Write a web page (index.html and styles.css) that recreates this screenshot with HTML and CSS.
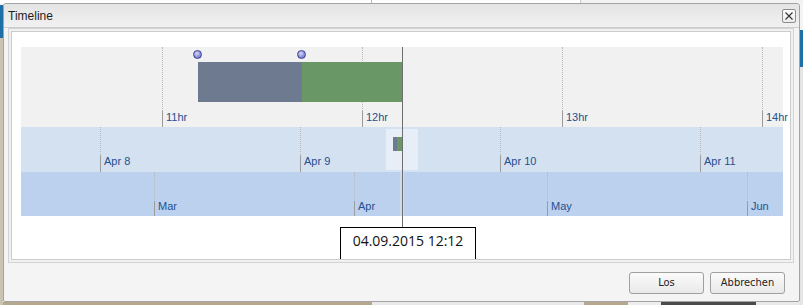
FILE: index.html
```html
<!DOCTYPE html>
<html>
<head>
<meta charset="utf-8">
<title>Timeline</title>
<link rel="stylesheet" href="styles.css">
</head>
<body>
<div class="dialog">
  <div class="titlebar">
    <span class="title">Timeline</span>
    <button class="close" aria-label="close">
      <svg width="12" height="12" viewBox="0 0 12 12"><path d="M2.5 2.5 L9.5 9.5 M9.5 2.5 L2.5 9.5" stroke="#333" stroke-width="1.1" fill="none"/></svg>
    </button>
  </div>
  <div class="panel">
    <div class="panel-inner">
      <div class="timeline">
        <div class="band band-hours">
          <div class="tick" style="left:141px"><span>11hr</span></div>
          <div class="tick" style="left:341px"><span>12hr</span></div>
          <div class="tick" style="left:541px"><span>13hr</span></div>
          <div class="tick" style="left:741px"><span>14hr</span></div>
          <div class="bar bar-gray" style="left:177px;width:104px"></div>
          <div class="bar bar-green" style="left:281px;width:100px"></div>
          <div class="handle" style="left:172px"></div>
          <div class="handle" style="left:276px"></div>
        </div>
        <div class="band band-days">
          <div class="highlight"></div>
          <div class="mini mini-gray"></div>
          <div class="mini mini-green"></div>
          <div class="tick" style="left:79px"><span>Apr 8</span></div>
          <div class="tick" style="left:279px"><span>Apr 9</span></div>
          <div class="tick" style="left:479px"><span>Apr 10</span></div>
          <div class="tick" style="left:679px"><span>Apr 11</span></div>
        </div>
        <div class="band band-months">
          <div class="highlight-thin"></div>
          <div class="tick" style="left:133px"><span>Mar</span></div>
          <div class="tick" style="left:333px"><span>Apr</span></div>
          <div class="tick" style="left:526px"><span>May</span></div>
          <div class="tick" style="left:726px"><span>Jun</span></div>
        </div>
        <div class="cursor"></div>
      </div>
      <div class="datebox">04.09.2015 12:12</div>
    </div>
  </div>
  <div class="footer">
    <button class="btn">Los</button>
    <button class="btn">Abbrechen</button>
  </div>
</div>
</body>
</html>
```
FILE: styles.css
```css
html, body {
  margin: 0;
  padding: 0;
}
body {
  width: 803px;
  height: 305px;
  overflow: hidden;
  padding-top: 3px;
  padding-left: 3px;
  box-sizing: border-box;
  background:
    linear-gradient(#1d6fa5, #1d6fa5) 0 5px / 3px 33px no-repeat,
    linear-gradient(#cbc4b4, #cbc4b4) 0 38px / 3px 267px no-repeat,
    linear-gradient(#1d6fa5, #1d6fa5) 800px 30px / 3px 37px no-repeat,
    linear-gradient(#e4e4e4, #e4e4e4) 800px 67px / 3px 238px no-repeat,
    linear-gradient(to right, #b5a88f 0 372px, #e9e9e9 372px 584px, #b5a88f 584px 628px, #ededed 628px 661px, #4b4b4b 661px 756px, #e9e9e9 756px) 0 302px / 100% 3px no-repeat,
    linear-gradient(to right, #ffffff 0 371px, #bdbdbd 371px 372px, #ffffff 372px 580px, #c8c8c8 580px 581px, #f2f2f2 581px) 0 0 / 100% 3px no-repeat,
    #f4f4f4;
  font-family: "Liberation Sans", Arial, sans-serif;
}

.dialog {
  width: 797px;
  height: 299px;
  box-sizing: border-box;
  border: 1px solid #a3a3a3;
  border-radius: 3px 3px 2px 2px;
  background: #f4f4f4;
  display: flex;
  flex-direction: column;
}

.titlebar {
  height: 24px;
  box-sizing: border-box;
  border-bottom: 1px solid #cdcdcd;
  background: linear-gradient(#e4e4e4, #f1f1f1);
  display: flex;
  align-items: flex-start;
  justify-content: space-between;
  padding: 0 3px 0 4px;
  border-radius: 3px 3px 0 0;
}
.title {
  font-size: 12px;
  line-height: 14px;
  margin-top: 5px;
  color: #1e1e1e;
}
.close {
  width: 14px;
  height: 14px;
  margin-top: 5px;
  padding: 0;
  box-sizing: border-box;
  border: 1px solid #8c8c8c;
  border-radius: 2px;
  background: linear-gradient(#fdfdfd, #ececec);
  display: flex;
  align-items: center;
  justify-content: center;
}
.close svg { display: block; }

.panel {
  margin-left: 4px;
  width: 786px;
  height: 235px;
  box-sizing: border-box;
  border: 1px solid #d3d3d3;
  padding: 2px;
  background: #f1f1f1;
}
.panel-inner {
  height: 100%;
  box-sizing: border-box;
  border: 1px solid #cbcbcb;
  background: #ffffff;
  overflow: hidden;
  padding: 15px 0 0 9px;
}

.timeline {
  position: relative;
  width: 762px;
  display: flex;
  flex-direction: column;
}
.band {
  position: relative;
}
.band-hours { height: 80px; background: #f1f1f1; }
.band-days { height: 45px; background: #d4e1f1; }
.band-months { height: 44px; background: #bcd1ee; }

.tick {
  position: absolute;
  top: 0;
  bottom: 0;
  width: 0;
  border-left: 1px dotted #b9b9b9;
}
.tick::after {
  content: "";
  position: absolute;
  left: -1px;
  bottom: 0;
  border-left: 1px solid #9c9c9c;
}
.band-hours .tick::after { height: 16px; }
.band-days .tick::after { height: 17px; }
.band-months .tick::after { height: 15px; }
.tick span {
  position: absolute;
  left: 3px;
  font-size: 11px;
  line-height: 13px;
  color: #24508f;
  white-space: nowrap;
}
.band-hours .tick span { top: 64px; }
.band-days .tick span,
.band-months .tick span { top: 28px; }

.bar {
  position: absolute;
  top: 15px;
  height: 40px;
}
.bar-gray { background: #6d7a8f; }
.bar-green { background: #699866; }

.handle {
  position: absolute;
  top: 3px;
  width: 9px;
  height: 9px;
  box-sizing: border-box;
  border-radius: 50%;
  border: 1px solid #3d3f8f;
  background: radial-gradient(circle at 40% 35%, #d8dbf6 0, #9ea3e2 40%, #5d61b8 100%);
}

.highlight {
  position: absolute;
  left: 365px;
  top: 2px;
  width: 32px;
  height: 41px;
  background: #e8eef7;
}
.mini {
  position: absolute;
  top: 10px;
  height: 14px;
}
.mini-gray { left: 372px; width: 4px; background: #6d7a8f; }
.mini-green { left: 376px; width: 5px; background: #699866; }

.highlight-thin {
  position: absolute;
  left: 379px;
  top: 0;
  width: 4px;
  height: 44px;
  background: #cddbef;
}

.cursor {
  position: absolute;
  left: 381px;
  top: 0;
  width: 1px;
  height: 180px;
  background: #6e6e6e;
  z-index: 2;
}

.datebox {
  margin: 11px 0 0 319px;
  width: 136px;
  height: 40px;
  box-sizing: border-box;
  border: 1px solid #000;
  border-bottom: none;
  background: #fff;
  text-align: center;
  font-family: "Open Sans", "Liberation Sans", sans-serif;
  font-size: 14px;
  line-height: 18px;
  padding-top: 4px;
  color: #111;
}

.footer {
  flex: 1;
  display: flex;
  justify-content: flex-end;
  align-items: flex-start;
  gap: 6px;
  padding: 9px 14px 0 0;
}
.btn {
  width: 75px;
  height: 22px;
  box-sizing: border-box;
  border: 1px solid #a0a0a0;
  border-radius: 3px;
  background: linear-gradient(#fbfbfb, #e9e9e9);
  font-family: "DejaVu Sans Condensed", "Liberation Sans", sans-serif;
  font-size: 11px;
  color: #222;
  padding: 0;
  line-height: 20px;
}
```
